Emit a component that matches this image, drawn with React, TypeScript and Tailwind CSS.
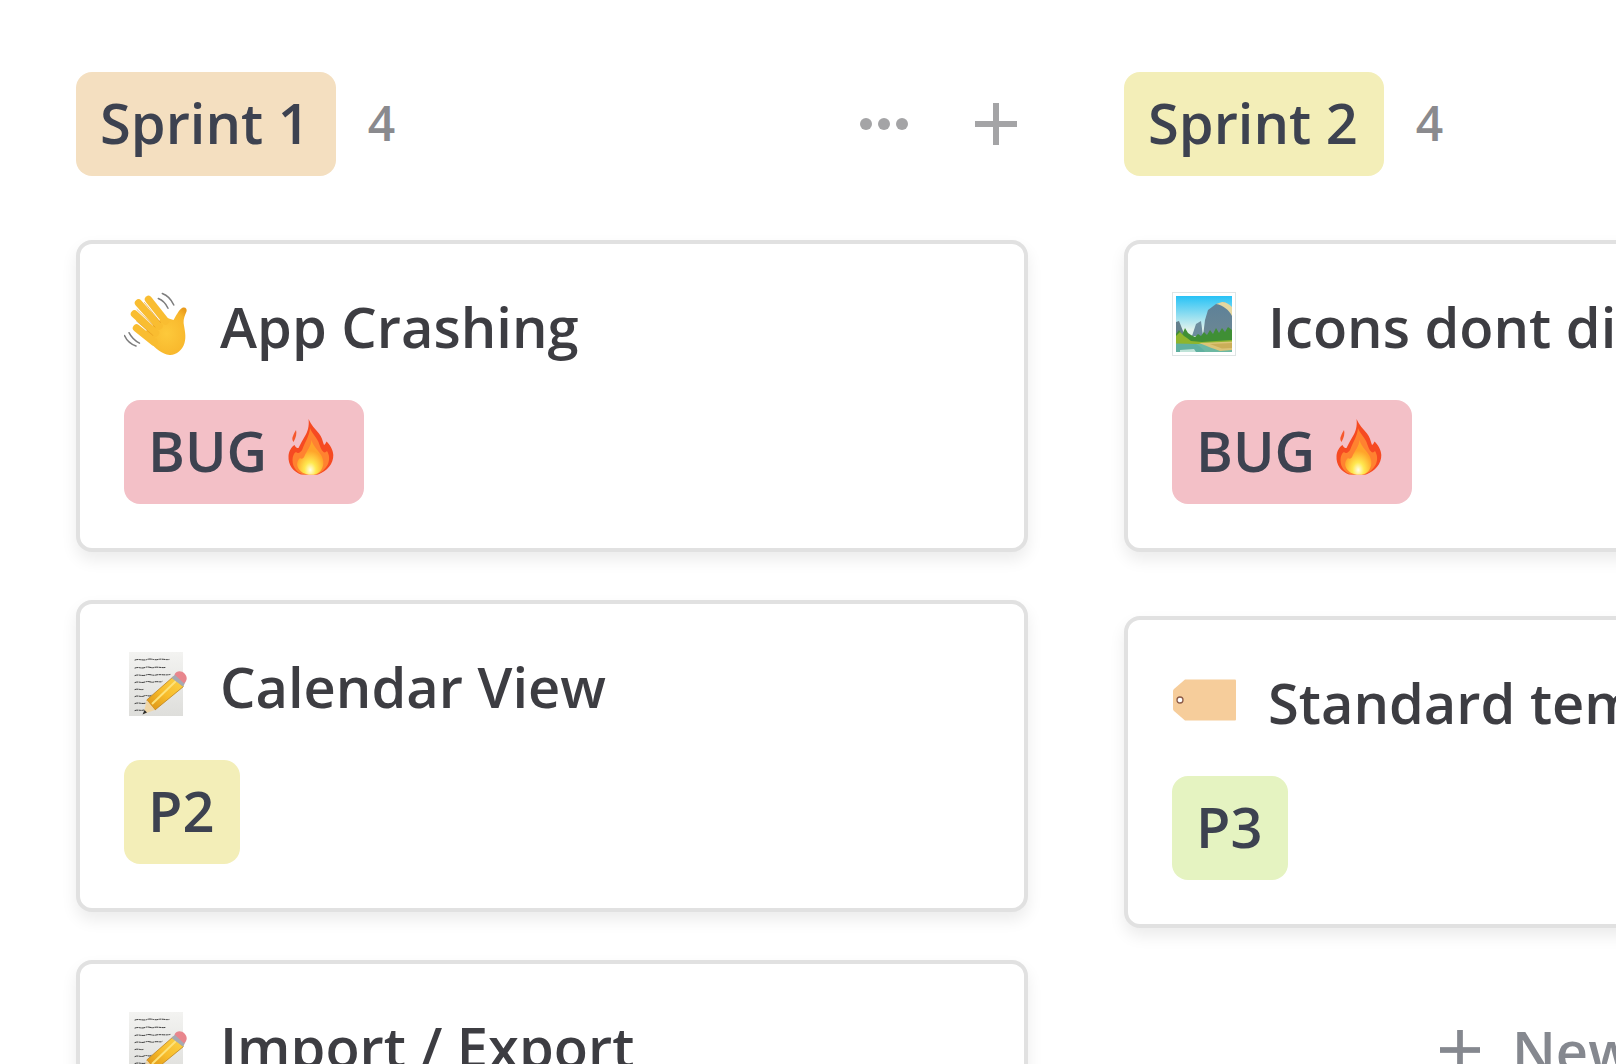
import React from 'react';

function Hand() {
  return (
    <svg viewBox="0 0 64 64" className="w-16 h-16 shrink-0">
      <defs>
        <radialGradient id="handFill" cx="0.55" cy="0.55" r="0.65">
          <stop offset="0" stopColor="#fdc93b" />
          <stop offset="0.75" stopColor="#f8b72c" />
          <stop offset="1" stopColor="#e89a1c" />
        </radialGradient>
      </defs>
      {/* motion lines */}
      <g fill="none" stroke="#7d7d7d" strokeWidth="1.500" strokeLinecap="round">
        <path d="M34.3 6.5c4 1.500 7.500 5 9.700 9.700" />
        <path d="M38.300 1.500c5 1.800 9 6 11.500 11.500" />
        <path d="M0.500 43.500c2 4.500 6 8.500 11.500 10.500" />
        <path d="M5 40.700c2 4 5.500 8 10.500 10.500" />
      </g>
      <path
        d="M40 25 L49.500 28 C52 24 54.500 18.500 58 16 C61 14.500 63.500 16.500 62.500 19.500 C61 23 59.300 27 59.600 31 C60.500 38 62.500 44 60.500 51 C58.500 58 52 63.500 45.500 63 C38 62.300 32 56.500 26 50.500 L18 42 Z"
        fill="url(#handFill)"
      />
      <g strokeWidth="7.400" strokeLinecap="round" stroke="#f9bd31">
        <path d="M24.500 7.500 L41.500 29" />
        <path d="M14.500 11 L35 34" />
        <path d="M10.500 22 L31.500 41" />
        <path d="M12.500 36 L30 50" />
      </g>
      <g fill="none" stroke="#e39a1f" strokeWidth="0.800" strokeLinecap="round" opacity="0.8">
        <path d="M20.500 10.500 L36.500 30.500" />
        <path d="M13 17.500 L31 35" />
        <path d="M12.500 29 L29 43.500" />
      </g>
    </svg>
  );
}

function Fire() {
  return (
    <svg viewBox="0 0 46 56" className="mb-1.5 h-14 w-[46px] shrink-0">
      <defs>
        <radialGradient id="fireCore" cx="0.5" cy="0.86" r="0.55">
          <stop offset="0" stopColor="#fffde8" />
          <stop offset="0.4" stopColor="#ffe84f" />
          <stop offset="1" stopColor="#ffa42a" />
        </radialGradient>
      </defs>
      <path d="M5 17 C6 14 7.500 12 8 11 C9 14 8 19 5.500 23 C4 21 4 19 5 17 Z" fill="#f6582c" />
      <path
        d="M20.500 0 C23 6 27 9.500 31 14.500 C34 18 34.500 22 36 26 C37.500 25 38 23.500 38.500 22.500 C42 26 45 30.500 45.300 36 C45.500 45 39 52 30 55.500 L13 55.500 C5 52.500 0 46 0.500 37 C0.800 32 3.500 28 6.500 26 C7.500 28.500 9 29 10.500 29 C12.500 25 14.500 21 17 17 C19.500 13 21.500 7 20.500 0 Z"
        fill="#f64a22"
      />
      <path
        d="M22 9 C23.500 14 28.500 18 30.500 23 C32 27 33 31 35.500 33 C37 34 38 33 39 32 C41.500 36 42 41 39.500 46 C37 50.500 33 53.500 29 55.500 L15 55.500 C9 53.500 4.500 48.500 4.500 41 C4.500 37 6 34 8 33 C10 35 13 33.500 14.500 30 C16.500 24 21.500 17 22 9 Z"
        fill="#ff8230"
      />
      <path
        d="M23.500 21 C25 27 30 31 33 36 C36 41 36.500 47 32.500 52 C30 55 27 55.800 23 55.800 C17 55.800 11.500 53 9.500 47.500 C8.500 44 10 40.500 12 39 C13.500 40.500 15.500 39.500 16.500 37 C18.500 32 23 28 23.500 21 Z"
        fill="url(#fireCore)"
      />
    </svg>
  );
}

function Memo() {
  return (
    <svg viewBox="0 0 64 64" className="w-16 h-16 shrink-0">
      <defs>
        <linearGradient id="memoPaper" x1="0" y1="0" x2="0" y2="1">
          <stop offset="0" stopColor="#f3f3f1" />
          <stop offset="1" stopColor="#dededb" />
        </linearGradient>
        <linearGradient id="memoPencil" x1="0" y1="1" x2="1" y2="0">
          <stop offset="0" stopColor="#d98e12" />
          <stop offset="0.5" stopColor="#f8bd2c" />
          <stop offset="1" stopColor="#fbd24a" />
        </linearGradient>
      </defs>
      <rect x="5" y="0" width="54" height="64" fill="url(#memoPaper)" />
      <g fill="none" stroke="#2f2f2f" strokeWidth="0.900" strokeLinecap="round" strokeDasharray="3 1.300 1.200 1.300">
        <path d="M11 8c4-1.500 8 1 12-.5s7 1 11 0 7 .5 11 0" />
        <path d="M11 16c4-1.500 6 1 10-.5s6 1 9 0 7 .5 11 0" />
        <path d="M11 23.500c4-1.500 7 1 11-.5s6 1 10 0 9 .5 14-.5" />
        <path d="M11 30.500c4-1.500 6 1 10-.5s6 1 9 0 6 .5 8-.5" />
        <path d="M11 37.500c3-1 5 .5 8 0" />
        <path d="M11 44.500c3-1.500 6 1 9-.5s5 1 7-.5" />
        <path d="M11 51.500c4-1.500 7 1 11-.5" />
        <path d="M11 58.500c3-1 6 .5 9-.5" />
      </g>
      {/* pencil */}
      <path d="M49.300 24.700 L59.300 34.700 L31 58 L22.700 48 Z" fill="url(#memoPencil)" stroke="#b87a10" strokeWidth="0.700" />
      <path d="M52 29 L28 52" stroke="#fde27a" strokeWidth="2" />
      <path d="M22.700 48 L31 58 L19.500 62 Z" fill="#f0d6a6" />
      <path d="M20.500 58 L23 60.500 L18.500 62.500 Z" fill="#2d2d2d" />
      <path d="M47.500 26 L53 20.500 L61.500 29.500 L59.300 34.700 Z" fill="#a5aab3" />
      <path d="M50.500 22.500 C52.500 18.500 57.500 18.500 60.500 21.500 C63.500 24.500 63.500 28.500 60 31.500 Z" fill="#e8868d" />
    </svg>
  );
}

function Park() {
  return (
    <svg viewBox="0 0 64 64" className="w-16 h-16 shrink-0">
      <defs>
        <linearGradient id="parkSky" x1="0" y1="0" x2="0" y2="1">
          <stop offset="0" stopColor="#27c2f6" />
          <stop offset="0.6" stopColor="#e0f2ec" />
        </linearGradient>
        <linearGradient id="parkRock" x1="0" y1="0" x2="0" y2="1">
          <stop offset="0" stopColor="#5d8199" />
          <stop offset="1" stopColor="#6c8793" />
        </linearGradient>
      </defs>
      <rect x="0.500" y="0.500" width="63" height="63" fill="#ffffff" stroke="#dfe5e5" />
      <rect x="4" y="4" width="56" height="56" fill="url(#parkSky)" />
      <path d="M4 30 L7 29 L13 44 L4 46 Z" fill="#64808c" />
      <path d="M20 44 L24 32 L29 29 L31 44 Z" fill="#6d8d9e" />
      <path d="M31 44 L33 28 L36 18 L44 12 L52 10 L60 16 L60 44 Z" fill="url(#parkRock)" />
      <path d="M44 12 L50 10 C54 10 57 12 60 15 L60 24 C57 18 51 13 44 12 Z" fill="#e4d7a0" />
      {/* tree line */}
      <path d="M4 50 L4 42 L7 38 L10 43 L13 36 L16 41 L19 43 L23 45 L26 42 L29 44 L32 40 L35 43 L38 38 L41 42 L44 36 L47 41 L50 36 L53 40 L56 35 L60 38 L60 50 Z" fill="#3f8f35" />
      <path d="M4 52 L4 44 L8 40 L12 44 L15 46 L19 49 L30 50 L44 49 L60 48 L60 52 Z" fill="#8eb52e" />
      <rect x="4" y="52" width="56" height="8" fill="#6cb8a2" />
      <path d="M27 51 L60 49.500 L60 58 L48 59 C42 57 35 54 27 51 Z" fill="#dcc477" />
      <path d="M38 52 L60 51 L60 56 L50 56.500 Z" fill="#cbae58" />
      <path d="M4 51.500 L24 52 C28 54 31 57 33 60 L4 60 Z" fill="#5fb0a0" />
      <path d="M8 58 L22 57 L24 60 L8 60 Z" fill="#bfe3d8" />
    </svg>
  );
}

function Tag() {
  return (
    <svg viewBox="0 0 64 64" className="w-16 h-16 shrink-0">
      <path d="M13 11.500 L63 11.500 Q64 11.500 64 12.500 L64 51.500 Q64 52.500 63 52.500 L13 52.500 L2 43 Q1 42 1 41 L1 23 Q1 22 2 21 Z" fill="#f6cd9b" />
      <circle cx="8" cy="32" r="3" fill="#ffffff" stroke="#8a5a48" strokeWidth="1.300" />
    </svg>
  );
}

function PlusIcon({ className }: { className: string }) {
  return (
    <svg viewBox="0 0 42 42" className={className} fill="currentColor">
      <rect x="18" y="0" width="6" height="42" />
      <rect x="0" y="18" width="42" height="6" />
    </svg>
  );
}

interface CardItem {
  title: string;
  icon: React.ReactNode;
  label: string;
  labelClass: string;
  fire?: boolean;
}

const sprint1: CardItem[] = [
  { title: 'App Crashing', icon: <Hand />, label: 'BUG', labelClass: 'bg-[#f3c0c7]', fire: true },
  { title: 'Calendar View', icon: <Memo />, label: 'P2', labelClass: 'bg-[#f3eeb8]' },
  { title: 'Import / Export', icon: <Memo />, label: 'P2', labelClass: 'bg-[#f3eeb8]' },
];

const sprint2: CardItem[] = [
  { title: 'Icons dont display', icon: <Park />, label: 'BUG', labelClass: 'bg-[#f3c0c7]', fire: true },
  { title: 'Standard templates', icon: <Tag />, label: 'P3', labelClass: 'bg-[#e5f3c1]' },
];

function Card({ item }: { item: CardItem }) {
  return (
    <div className="h-[312px] shrink-0 rounded-2xl border-4 border-[#e1e1e1] bg-white px-11 pt-12 shadow-[0_8px_16px_rgba(0,0,0,0.08)]">
      <div className="flex h-16 items-center gap-8">
        {item.icon}
        <span className="whitespace-nowrap pt-1 text-[56px] leading-none font-semibold text-[#3d3d42]">{item.title}</span>
      </div>
      <div className={`mt-11 inline-flex h-[104px] items-center gap-[21px] rounded-2xl pb-1 pl-6 text-[56px] font-semibold text-[#3d4250] ${item.fire ? 'pr-[30px]' : 'pr-[26px]'} ${item.labelClass}`}>
        {item.label}
        {item.fire && <Fire />}
      </div>
    </div>
  );
}

function ColumnHeader({ title, chipClass }: { title: string; chipClass: string }) {
  return (
    <div className="mb-16 flex h-[104px] items-center">
      <div className={`flex h-full items-center rounded-2xl pb-1 pl-6 pr-[26px] text-[56px] font-semibold text-[#3d4250] ${chipClass}`}>{title}</div>
      <span className="ml-8 pb-0.5 text-[48px] font-semibold text-[#8a8a8e]">4</span>
      <div className="ml-auto flex items-center gap-[67px] pr-[11px] text-[#a4a4a6]">
        <div className="flex gap-1.5">
          <div className="h-3 w-3 rounded-full bg-current" />
          <div className="h-3 w-3 rounded-full bg-current" />
          <div className="h-3 w-3 rounded-full bg-current" />
        </div>
        <PlusIcon className="h-[42px] w-[42px]" />
      </div>
    </div>
  );
}

export default function App() {
  return (
    <div className="h-[1064px] w-[1616px] overflow-hidden bg-white pl-[76px] pt-[72px] font-['Open_Sans',sans-serif]">
      <div className="flex gap-24">
        <div className="w-[952px] shrink-0">
          <ColumnHeader title="Sprint 1" chipClass="bg-[#f4dfc0]" />
          <div className="flex flex-col gap-12">
            {sprint1.map((item) => (
              <Card key={item.title} item={item} />
            ))}
          </div>
        </div>
        <div className="w-[952px] shrink-0">
          <ColumnHeader title="Sprint 2" chipClass="bg-[#f3eeb8]" />
          <div className="flex flex-col gap-16">
            {sprint2.map((item) => (
              <Card key={item.title} item={item} />
            ))}
          </div>
          <div className="ml-[316px] mt-[94px] flex items-center gap-8 text-[56px] font-semibold leading-none text-[#85888f]">
            <PlusIcon className="h-10 w-10" />
            New
          </div>
        </div>
      </div>
    </div>
  );
}
